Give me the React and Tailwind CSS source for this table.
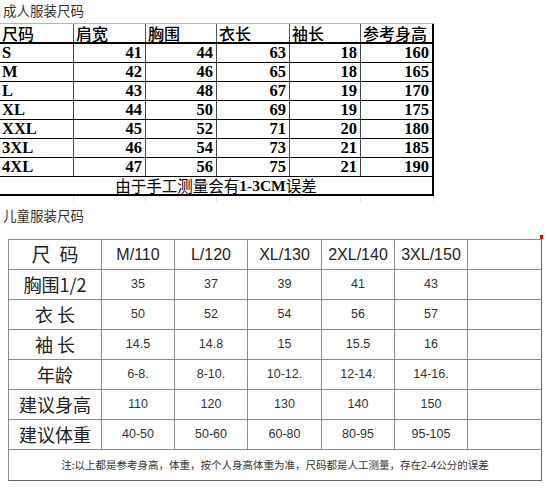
import React from 'react';

const adult = [
  ['S', 41, 44, 63, 18, 160],
  ['M', 42, 46, 65, 18, 165],
  ['L', 43, 48, 67, 19, 170],
  ['XL', 44, 50, 69, 19, 175],
  ['XXL', 45, 52, 71, 20, 180],
  ['3XL', 46, 54, 73, 21, 185],
  ['4XL', 47, 56, 75, 21, 190],
];

const adultHead = ['尺码', '肩宽', '胸围', '衣长', '袖长', '参考身高'];

const kidsHead = ['M/110', 'L/120', 'XL/130', '2XL/140', '3XL/150', ''];

const kids = [
  ['胸围1/2', ['35', '37', '39', '41', '43', '']],
  ['衣 长', ['50', '52', '54', '56', '57', '']],
  ['袖 长', ['14.5', '14.8', '15', '15.5', '16', '']],
  ['年龄', ['6-8.', '8-10.', '10-12.', '12-14.', '14-16.', '']],
  ['建议身高', ['110', '120', '130', '140', '150', '']],
  ['建议体重', ['40-50', '50-60', '60-80', '80-95', '95-105', '']],
];

export default function App() {
  return (
    <div className="w-[548px] h-[490px] bg-white overflow-hidden relative text-[#111] font-['Noto_Sans_CJK_SC',sans-serif]">
      {/* Adult title */}
      <div className="h-[23px] pl-[3px] pt-[1px] text-[13.5px] leading-[18px] text-[#333]">成人服装尺码</div>

      {/* Adult table */}
      <div className="w-[434px] border-t border-[#b5b5b5]">
        <div className="grid grid-cols-[74px_72px_71px_73px_71px_73px] h-[20px] border-b-2 border-black">
          {adultHead.map((h, i) => (
            <div
              key={h}
              className={`flex items-center pl-[2px] text-[16px] leading-none font-medium text-black ${i < 5 ? 'border-r border-[#555]' : 'border-r-2 border-black'}`}
            >
              {h}
            </div>
          ))}
        </div>
        {adult.map((r) => (
          <div key={r[0]} className="grid grid-cols-[74px_72px_71px_73px_71px_73px] h-[19px] border-b border-black">
            {r.map((v, i) => (
              <div
                key={i}
                className={`flex items-center text-[16.5px] leading-none font-bold text-black font-['Liberation_Serif',serif] ${i === 0 ? 'pl-[2px] justify-start' : 'pr-[3px] justify-end'} ${i < 5 ? 'border-r border-[#444]' : 'border-r-2 border-black'}`}
              >
                {v}
              </div>
            ))}
          </div>
        ))}
        <div className="h-[19px] border-b-2 border-black border-r-2 flex items-center justify-center text-[15.5px] leading-none text-black">
          <span>由于手工测量会有</span>
          <span className="font-bold font-['Liberation_Serif',serif]">1-3CM</span>
          <span>误差</span>
        </div>
      </div>

      {/* faint ghost grid below */}
      <div className="grid grid-cols-[74px_72px_71px_73px_71px_73px] w-[434px] h-[6px]">
        {adultHead.map((h) => (
          <div key={h} className="border-r border-[#e4e4e4]" />
        ))}
      </div>

      {/* Kids title */}
      <div className="h-[37px] pl-[3px] pt-[4px] text-[13.5px] leading-[18px] text-[#333]">儿童服装尺码</div>

      {/* Kids table */}
      <div className="ml-[8px] w-[534px] border-t border-l border-[#8a8a8a]">
        <div className="grid grid-cols-[93px_73px_73px_74px_73px_73px_74px] h-[30px] border-b border-[#8a8a8a]">
          <div className="border-r border-[#8a8a8a] flex items-center justify-center gap-[9px] text-[19px] text-[#222]">
            <span>尺</span>
            <span>码</span>
          </div>
          {kidsHead.map((h, i) => (
            <div
              key={i}
              className={`border-r ${i === 5 ? 'border-[#666]' : 'border-[#8a8a8a]'} flex items-center justify-center text-[16px] text-[#222] font-['Liberation_Sans',sans-serif]`}
            >
              {h}
            </div>
          ))}
        </div>
        {kids.map(([label, vals]) => (
          <div key={label} className="grid grid-cols-[93px_73px_73px_74px_73px_73px_74px] h-[30px] border-b border-[#8a8a8a]">
            <div className="border-r border-[#8a8a8a] flex items-center justify-center text-[18px] text-[#222]">
              {label}
            </div>
            {vals.map((v, i) => (
              <div
                key={i}
                className={`border-r ${i === 5 ? 'border-[#666]' : 'border-[#8a8a8a]'} flex items-center justify-center text-[12.5px] text-[#333] font-['Liberation_Sans',sans-serif]`}
              >
                {v}
              </div>
            ))}
          </div>
        ))}
        <div className="h-[31px] border-b border-r border-[#666] flex items-center justify-center text-[10.5px] text-[#333]">
          注:以上都是参考身高，体重，按个人身高体重为准，尺码都是人工测量，存在2-4公分的误差
        </div>
      </div>

      <div className="absolute left-[540px] top-[235px] w-[3px] h-[4px] bg-[#e00000]" />
    </div>
  );
}
